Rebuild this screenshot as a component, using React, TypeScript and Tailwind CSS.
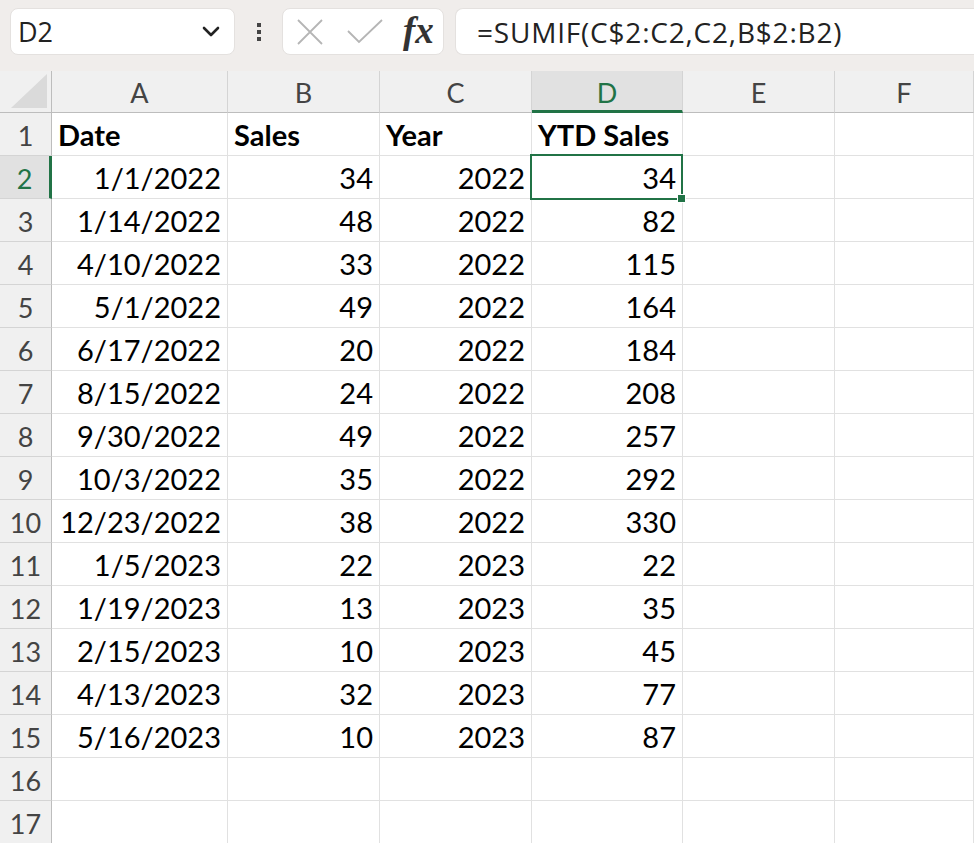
import React from "react";

const rows: string[][] = [
  ["1/1/2022", "34", "2022", "34"],
  ["1/14/2022", "48", "2022", "82"],
  ["4/10/2022", "33", "2022", "115"],
  ["5/1/2022", "49", "2022", "164"],
  ["6/17/2022", "20", "2022", "184"],
  ["8/15/2022", "24", "2022", "208"],
  ["9/30/2022", "49", "2022", "257"],
  ["10/3/2022", "35", "2022", "292"],
  ["12/23/2022", "38", "2022", "330"],
  ["1/5/2023", "22", "2023", "22"],
  ["1/19/2023", "13", "2023", "35"],
  ["2/15/2023", "10", "2023", "45"],
  ["4/13/2023", "32", "2023", "77"],
  ["5/16/2023", "10", "2023", "87"],
];

const cellFont = { fontFamily: "Lato, 'Liberation Sans', sans-serif" };
const uiFont = { fontFamily: "'Open Sans', 'Noto Sans', sans-serif" };

function RowHeader({ n, active }: { n: number; active?: boolean }) {
  return (
    <div
      className={
        active
          ? "h-[43px] bg-[#e1e1e1] border-b border-[#d4d4d4] border-r-[3px] border-r-[#217346] flex items-end justify-center pb-[6px] text-[27px] text-[#217346] leading-none"
          : "h-[43px] bg-[#f0f0f0] border-b border-[#d4d4d4] border-r border-r-[#bdbdbd] flex items-end justify-center pb-[6px] text-[27px] text-[#444] leading-none"
      }
    >
      {n}
    </div>
  );
}

function Cell({ text, align, bold }: { text?: string; align: "l" | "r"; bold?: boolean }) {
  return (
    <div
      className={
        "h-[43px] border-b border-r border-[#e1e1e1] flex items-end pb-[6px] px-[6px] text-[29px] leading-none text-black whitespace-nowrap overflow-visible " +
        (align === "r" ? "justify-end " : "justify-start ") +
        (bold ? "font-bold" : "")
      }
    >
      {text}
    </div>
  );
}

export default function App() {
  const colHeads = ["A", "B", "C", "D", "E", "F"];
  return (
    <div className="w-[974px] h-[843px] overflow-hidden bg-white" style={cellFont}>
      {/* Toolbar */}
      <div className="h-[71px] bg-[#f0edeb] flex items-start pt-[8px] pl-[10px]">
        <div className="w-[225px] h-[47px] bg-white rounded-[8px] border border-[#e4e1df] flex items-center justify-between pl-[7px] pr-[14px]">
          <span className="text-[27px] text-[#222] leading-none" style={uiFont}>D2</span>
          <svg width="18" height="12" viewBox="0 0 18 12">
            <path d="M2 2 L9 9 L16 2" fill="none" stroke="#222" strokeWidth="2.6" strokeLinecap="round" strokeLinejoin="round" />
          </svg>
        </div>
        <div className="w-[47px] h-[47px] flex flex-col items-center justify-center gap-[3px]">
          <div className="w-[4px] h-[4px] bg-[#444]" />
          <div className="w-[4px] h-[4px] bg-[#444]" />
          <div className="w-[4px] h-[4px] bg-[#444]" />
        </div>
        <div className="w-[162px] h-[47px] bg-white rounded-[8px] border border-[#e4e1df] flex items-center pl-[13px]">
          <svg width="28" height="28" viewBox="0 0 28 28">
            <path d="M2 2 L26 26 M26 2 L2 26" stroke="#b5b5b5" strokeWidth="1.8" fill="none" />
          </svg>
          <svg width="38" height="28" viewBox="0 0 38 28" className="ml-[22px]">
            <path d="M2 13 L13 24 L36 2" stroke="#b5b5b5" strokeWidth="1.8" fill="none" />
          </svg>
          <span
            className="ml-[19px] text-[37px] italic font-bold text-[#333] leading-none pb-[2px]"
            style={{ fontFamily: "'Liberation Serif', 'DejaVu Serif', serif" }}
          >
            fx
          </span>
        </div>
        <div className="ml-[11px] flex-1 h-[47px] bg-white rounded-l-[8px] border border-r-0 border-[#e4e1df] flex items-center pl-[21px]">
          <span className="text-[28px] text-[#222] leading-none whitespace-nowrap tracking-[0.8px]" style={uiFont}>
            =SUMIF(C$2:C2,C2,B$2:B2)
          </span>
        </div>
      </div>

      {/* Grid */}
      <div className="grid grid-cols-[52px_176px_152px_152px_151px_152px_1fr]">
        {/* corner */}
        <div className="h-[42px] bg-[#f0f0f0] border-r border-b border-[#bdbdbd] flex items-end justify-end p-[4px]">
          <svg width="36" height="34" viewBox="0 0 36 34">
            <polygon points="36,0 36,34 0,34" fill="#dadada" />
          </svg>
        </div>
        {colHeads.map((c) =>
          c === "D" ? (
            <div
              key={c}
              className="h-[42px] bg-[#e1e1e1] border-r border-[#d4d4d4] border-b-[3px] border-b-[#217346] flex items-center justify-center pt-[3px] text-[27px] text-[#217346] leading-none"
            >
              {c}
            </div>
          ) : (
            <div
              key={c}
              className="h-[42px] bg-[#f0f0f0] border-r border-[#d4d4d4] border-b border-b-[#bdbdbd] flex items-center justify-center pt-[1px] text-[27px] text-[#444] leading-none"
            >
              {c}
            </div>
          )
        )}

        {/* row 1 */}
        <RowHeader n={1} />
        <Cell text="Date" align="l" bold />
        <Cell text="Sales" align="l" bold />
        <Cell text="Year" align="l" bold />
        <Cell text="YTD Sales" align="l" bold />
        <Cell align="l" />
        <Cell align="l" />

        {rows.map((r, i) => (
          <React.Fragment key={i}>
            <RowHeader n={i + 2} active={i === 0} />
            <Cell text={r[0]} align="r" />
            <Cell text={r[1]} align="r" />
            <Cell text={r[2]} align="r" />
            {i === 0 ? (
              <div className="relative h-[43px] border-b border-r border-[#e1e1e1] flex items-end justify-end pb-[6px] px-[6px] text-[29px] leading-none text-black">
                {r[3]}
                <div className="absolute left-[-2px] top-[-2px] right-[-1px] bottom-[-2px] border-[2.5px] border-[#217346]" />
                <div className="absolute right-[-4px] bottom-[-5px] w-[9px] h-[9px] bg-[#217346] border border-white" />
              </div>
            ) : (
              <Cell text={r[3]} align="r" />
            )}
            <Cell align="l" />
            <Cell align="l" />
          </React.Fragment>
        ))}

        {[16, 17].map((n) => (
          <React.Fragment key={n}>
            <RowHeader n={n} />
            <Cell align="l" />
            <Cell align="l" />
            <Cell align="l" />
            <Cell align="l" />
            <Cell align="l" />
            <Cell align="l" />
          </React.Fragment>
        ))}
      </div>
    </div>
  );
}
